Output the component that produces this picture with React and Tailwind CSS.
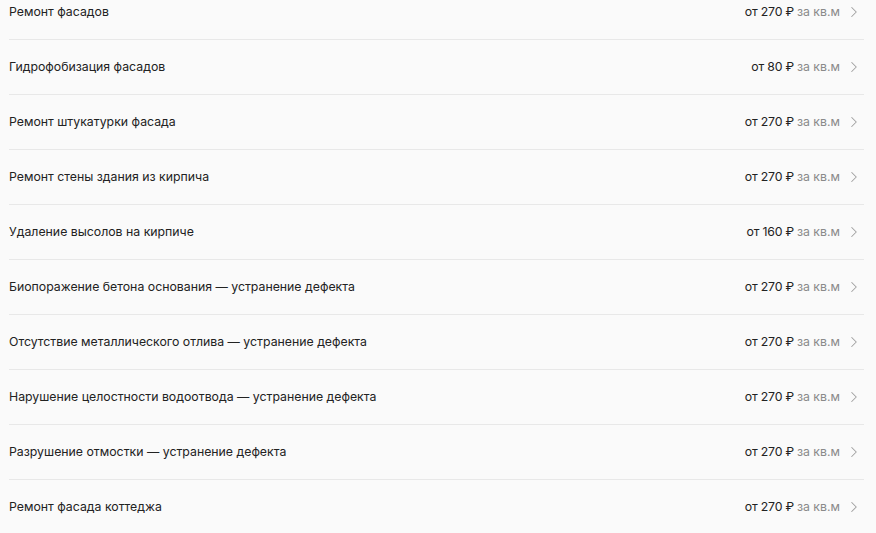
import { ChevronRight } from 'lucide-react';

const services = [
  { name: 'Ремонт фасадов', price: 270 },
  { name: 'Гидрофобизация фасадов', price: 80 },
  { name: 'Ремонт штукатурки фасада', price: 270 },
  { name: 'Ремонт стены здания из кирпича', price: 270 },
  { name: 'Удаление высолов на кирпиче', price: 160 },
  { name: 'Биопоражение бетона основания — устранение дефекта', price: 270 },
  { name: 'Отсутствие металлического отлива — устранение дефекта', price: 270 },
  { name: 'Нарушение целостности водоотвода — устранение дефекта', price: 270 },
  { name: 'Разрушение отмостки — устранение дефекта', price: 270 },
  { name: 'Ремонт фасада коттеджа', price: 270 },
];

export default function App() {
  return (
    <div className="h-[533px] overflow-hidden bg-[#fafafa] font-['Inter',sans-serif] text-[12.3px] text-[#222]">
      <ul className="-mt-[15px] ml-[9px] mr-[12px]">
        {services.map((s) => (
          <li
            key={s.name}
            className="flex h-[55px] items-center justify-between border-b border-[#e8e8e8] pr-[1px]"
          >
            <span>{s.name}</span>
            <span className="flex items-center">
              <span className="tracking-[-0.2px]">от {s.price} ₽</span>
              <span className="ml-[3px] text-[#8a8a8a]">за кв.м</span>
              <ChevronRight className="ml-[5px] h-[18px] w-[18px] text-[#a0a0a0]" strokeWidth={1.4} />
            </span>
          </li>
        ))}
      </ul>
    </div>
  );
}
